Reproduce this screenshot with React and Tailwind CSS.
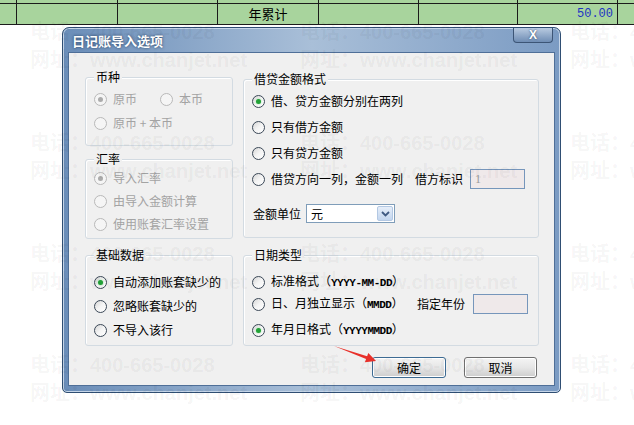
import React from "react";

const COLS = ["w-[17px]", "w-[101px]", "w-[100px]", "w-[101px]", "w-[100px]", "w-[99px]", "w-[100px]"];

function TableRow({ label, amount, clip }) {
  return (
    <div className={clip ? "flex h-[4px] overflow-hidden border-b border-[#1b1b1b]" : "flex h-[21px] border-b border-[#1b1b1b]"}>
      {COLS.map((w, i) => (
        <div key={i} className={w + " flex shrink-0 items-center border-r border-[#1b1b1b]"}>
          {i === 3 && (
            <span className={clip ? "-mt-[17px] w-full text-center" : "w-full text-center"}>{label}</span>
          )}
          {i === 6 && (
            <span className={clip ? "-mt-[17px] w-full pr-[4px] text-right font-['Liberation_Mono',monospace] text-[12px] text-[#1d33c4]" : "w-full pr-[4px] text-right font-['Liberation_Mono',monospace] text-[12px] text-[#1d33c4]"}>
              {amount}
            </span>
          )}
        </div>
      ))}
      <div className="flex-1" />
    </div>
  );
}

function Radio({ checked, disabled }) {
  return (
    <span
      className={
        disabled
          ? "flex h-[13px] w-[13px] shrink-0 items-center justify-center rounded-full border border-[#b9b9b9] bg-[#f5f5f5]"
          : "flex h-[13px] w-[13px] shrink-0 items-center justify-center rounded-full border border-[#3b4857] bg-gradient-to-br from-[#d6d6d6] via-[#f4f4f4] to-white"
      }
    >
      {checked && (
        <span className={disabled ? "h-[5px] w-[5px] rounded-full bg-[#ababab]" : "h-[5px] w-[5px] rounded-full bg-[#22a137] shadow-[0_0_2px_#8fe09a]"} />
      )}
    </span>
  );
}

function Option({ children, checked, disabled, className }) {
  return (
    <div className={"flex h-[16px] items-center gap-[6px] " + (className || "")}>
      <Radio checked={checked} disabled={disabled} />
      <span className={disabled ? "whitespace-nowrap text-[#a3a3a3]" : "whitespace-nowrap text-black"}>{children}</span>
    </div>
  );
}

function Group({ title, className, children }) {
  return (
    <div className={"relative rounded-[3px] border border-[#d3dbe2] shadow-[inset_1px_1px_0_#ffffff] " + className}>
      <span className="absolute -top-[9px] left-[8px] bg-[#f0f0f0] px-[2px] leading-[16px] text-black">{title}</span>
      {children}
    </div>
  );
}

function Mono({ children }) {
  return <span className="font-['Liberation_Mono',monospace] text-[11px] font-bold tracking-[-0.5px]">{children}</span>;
}

function Field() {
  return <div className="h-[20px] w-[55px] shrink-0 border border-[#7696bb] bg-[#efe9ea]" />;
}

function Watermark() {
  const pair = (
    <div className="flex flex-col">
      <div className="flex h-[28px] items-center pl-[30px]">
        <span className="w-[270px] shrink-0 whitespace-nowrap">电话：400-665-0028</span>
        <span className="w-[270px] shrink-0 whitespace-nowrap">电话：400-665-0028</span>
        <span className="w-[270px] shrink-0 whitespace-nowrap">电话：400-665-0028</span>
      </div>
      <div className="flex h-[28px] items-center pl-[30px]">
        <span className="w-[270px] shrink-0 whitespace-nowrap">网址：www.chanjet.net</span>
        <span className="w-[270px] shrink-0 whitespace-nowrap">网址：www.chanjet.net</span>
        <span className="w-[270px] shrink-0 whitespace-nowrap">网址：www.chanjet.net</span>
      </div>
    </div>
  );
  return (
    <div className="pointer-events-none absolute inset-0 flex flex-col gap-[55px] overflow-hidden pt-[18px] font-['Liberation_Sans','Noto_Sans_CJK_SC',sans-serif] text-[20px] font-bold text-black/[0.05]">
      {pair}
      {pair}
      {pair}
      {pair}
    </div>
  );
}

export default function App() {
  return (
    <div className="relative h-[425px] w-[634px] overflow-hidden bg-white font-['Noto_Sans_CJK_SC',sans-serif] text-[12px]">
      {/* ledger rows behind the dialog */}
      <div className="flex flex-col bg-[#a8d49d] text-[13px] leading-[16px] text-black">
        <TableRow clip label="月合计" amount="50.00" />
        <TableRow label="年累计" amount="50.00" />
      </div>

      {/* dialog */}
      <div className="ml-[62px] mt-[2px] flex h-[366px] w-[499px] flex-col rounded-t-[7px] rounded-b-[5px] border border-[#2f4e73] bg-gradient-to-r from-[#6a8db8] via-[#a9bfd8] to-[#7b9bc3] px-[5px] pb-[6px] shadow-[inset_0_0_0_1px_#c5d5e8]">
        <div className="flex h-[24px] shrink-0 items-start justify-between">
          <span className="pl-[4px] pt-[5px] text-[13px] font-bold leading-[15px] text-white [text-shadow:0_0_3px_#1f3a5e]">日记账导入选项</span>
          <div className="mr-[2px] flex h-[15px] w-[40px] items-center justify-center rounded-b-[4px] border border-t-0 border-[#3c5576] bg-gradient-to-b from-[#b9cbe1] via-[#93abca] to-[#6f8db4] font-['Liberation_Sans',sans-serif] text-[12px] font-bold leading-none text-white [text-shadow:0_0_2px_#2a3f5c]">
            X
          </div>
        </div>

        <div className="flex flex-1 flex-col border border-[#4f6f98] bg-[#f0f0f0] px-[16px] pt-[24px] leading-[16px]">
          <div className="grid grid-cols-[148px_296px] gap-x-[10px] gap-y-[16px]">
            <div className="flex flex-col gap-[13px]">
              <Group title="币种" className="h-[69px] pl-[8px] pt-[13px]">
                <div className="flex">
                  <Option checked disabled className="w-[66px]">原币</Option>
                  <Option disabled>本币</Option>
                </div>
                <Option disabled className="mt-[8px]">原币 + 本币</Option>
              </Group>
              <Group title="汇率" className="flex h-[80px] flex-col gap-[7px] pl-[8px] pt-[10px]">
                <Option checked disabled>导入汇率</Option>
                <Option disabled>由导入金额计算</Option>
                <Option disabled>使用账套汇率设置</Option>
              </Group>
            </div>

            <Group title="借贷金额格式" className="mt-[2px] flex h-[159px] flex-col gap-[10px] pl-[8px] pt-[13px]">
              <Option checked>借、贷方金额分别在两列</Option>
              <Option>只有借方金额</Option>
              <Option>只有贷方金额</Option>
              <div className="flex h-[16px] items-center">
                <Option className="w-[163px]">借贷方向一列，金额一列</Option>
                <span className="whitespace-nowrap">借方标识</span>
                <div className="ml-[7px] flex h-[20px] w-[55px] items-center border border-[#7696bb] bg-[#efe9ea] pl-[4px] font-['Liberation_Serif',serif] text-[12px] text-[#9a9a9a]">
                  1
                </div>
              </div>
              <div className="ml-[1px] mt-[7px] flex h-[19px] items-center gap-[5px]">
                <span className="whitespace-nowrap">金额单位</span>
                <div className="flex h-[19px] w-[89px] items-center justify-between border border-[#7f9db9] bg-white pl-[4px]">
                  <span>元</span>
                  <div className="mr-[1px] flex h-[15px] w-[16px] items-center justify-center rounded-[2px] border border-[#b3c8e3] bg-gradient-to-b from-[#e6eef9] to-[#c3d6ef]">
                    <svg width="9" height="6" viewBox="0 0 9 6">
                      <path d="M1 1 L4.5 4.5 L8 1" fill="none" stroke="#3f5a82" strokeWidth="1.8" />
                    </svg>
                  </div>
                </div>
              </div>
            </Group>

            <Group title="基础数据" className="flex h-[91px] flex-col gap-[8px] pl-[8px] pt-[18px]">
              <Option checked>自动添加账套缺少的</Option>
              <Option>忽略账套缺少的</Option>
              <Option>不导入该行</Option>
            </Group>

            <Group title="日期类型" className="flex h-[91px] flex-col pl-[8px] pt-[18px]">
              <Option>
                标准格式（<Mono>YYYY-MM-DD</Mono>）
              </Option>
              <div className="mt-[6px] flex h-[16px] items-center">
                <Option className="w-[165px]">
                  日、月独立显示（<Mono>MMDD</Mono>）
                </Option>
                <span className="whitespace-nowrap">指定年份</span>
                <div className="ml-[8px]">
                  <Field />
                </div>
              </div>
              <Option checked className="mt-[10px]">
                年月日格式（<Mono>YYYYMMDD</Mono>）
              </Option>
            </Group>
          </div>

          <div className="mt-[11px] flex justify-end gap-[18px] pr-[1px]">
            <button className="h-[21px] w-[74px] rounded-[3px] border border-[#3d6b93] bg-gradient-to-b from-[#f4f4f4] via-[#e6e6e6] to-[#cdcdcd] text-[12px] leading-none text-black shadow-[inset_0_0_0_1px_#ffffff]">
              确定
            </button>
            <button className="h-[21px] w-[73px] rounded-[3px] border border-[#707070] bg-gradient-to-b from-[#f4f4f4] via-[#e6e6e6] to-[#cdcdcd] text-[12px] leading-none text-black shadow-[inset_0_0_0_1px_#ffffff]">
              取消
            </button>
          </div>
        </div>
      </div>

      <Watermark />

      {/* red annotation arrow */}
      <svg className="pointer-events-none absolute left-[330px] top-[340px]" width="52" height="26" viewBox="0 0 52 26">
        <polygon points="4,6 37.1,16.2 38.3,12.9 46,21 34.9,22.3 36.1,19.0" fill="#e8302a" />
      </svg>
    </div>
  );
}
